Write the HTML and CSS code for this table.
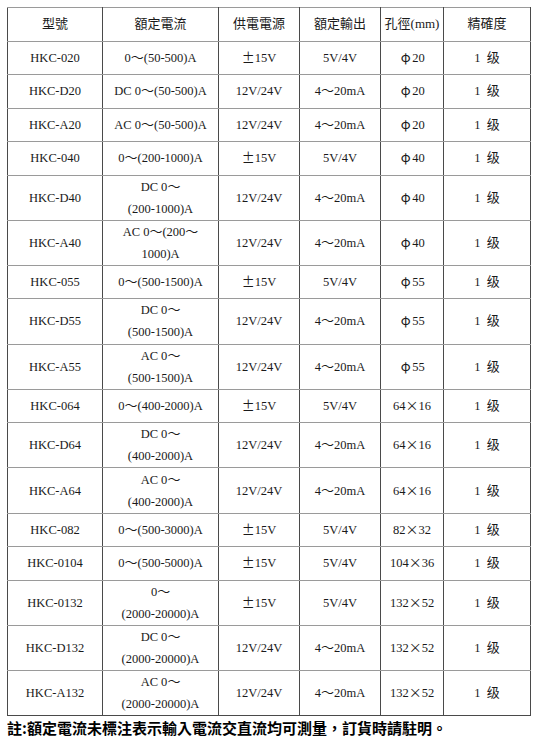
FILE: index.html
```html
<!DOCTYPE html>
<html lang="zh-Hant">
<head>
<meta charset="utf-8">
<link rel="stylesheet" href="styles.css">
</head>
<body>
<table class="spec">
<colgroup>
<col class="c1"><col class="c2"><col class="c3"><col class="c4"><col class="c5"><col class="c6">
</colgroup>
<tr class="r1 head"><td>型號</td><td>額定電流</td><td>供電電源</td><td>額定輸出</td><td>孔徑(mm)</td><td>精確度</td></tr>
<tr class="r1"><td>HKC-020</td><td>0<span class="fw">～</span>(50-500)A</td><td><span class="fw">±</span>15V</td><td>5V/4V</td><td><span class="fw">φ</span>20</td><td>1 <span class="cj">级</span></td></tr>
<tr class="r1"><td>HKC-D20</td><td>DC 0<span class="fw">～</span>(50-500)A</td><td>12V/24V</td><td>4<span class="fw">～</span>20mA</td><td><span class="fw">φ</span>20</td><td>1 <span class="cj">级</span></td></tr>
<tr class="r1"><td>HKC-A20</td><td>AC 0<span class="fw">～</span>(50-500)A</td><td>12V/24V</td><td>4<span class="fw">～</span>20mA</td><td><span class="fw">φ</span>20</td><td>1 <span class="cj">级</span></td></tr>
<tr class="r1"><td>HKC-040</td><td>0<span class="fw">～</span>(200-1000)A</td><td><span class="fw">±</span>15V</td><td>5V/4V</td><td><span class="fw">φ</span>40</td><td>1 <span class="cj">级</span></td></tr>
<tr class="r2"><td>HKC-D40</td><td>DC 0<span class="fw">～</span><br>(200-1000)A</td><td>12V/24V</td><td>4<span class="fw">～</span>20mA</td><td><span class="fw">φ</span>40</td><td>1 <span class="cj">级</span></td></tr>
<tr class="r2"><td>HKC-A40</td><td>AC 0<span class="fw">～</span>(200<span class="fw">～</span><br>1000)A</td><td>12V/24V</td><td>4<span class="fw">～</span>20mA</td><td><span class="fw">φ</span>40</td><td>1 <span class="cj">级</span></td></tr>
<tr class="r1"><td>HKC-055</td><td>0<span class="fw">～</span>(500-1500)A</td><td><span class="fw">±</span>15V</td><td>5V/4V</td><td><span class="fw">φ</span>55</td><td>1 <span class="cj">级</span></td></tr>
<tr class="r2"><td>HKC-D55</td><td>DC 0<span class="fw">～</span><br>(500-1500)A</td><td>12V/24V</td><td>4<span class="fw">～</span>20mA</td><td><span class="fw">φ</span>55</td><td>1 <span class="cj">级</span></td></tr>
<tr class="r2"><td>HKC-A55</td><td>AC 0<span class="fw">～</span><br>(500-1500)A</td><td>12V/24V</td><td>4<span class="fw">～</span>20mA</td><td><span class="fw">φ</span>55</td><td>1 <span class="cj">级</span></td></tr>
<tr class="r1"><td>HKC-064</td><td>0<span class="fw">～</span>(400-2000)A</td><td><span class="fw">±</span>15V</td><td>5V/4V</td><td>64<span class="fw">×</span>16</td><td>1 <span class="cj">级</span></td></tr>
<tr class="r2"><td>HKC-D64</td><td>DC 0<span class="fw">～</span><br>(400-2000)A</td><td>12V/24V</td><td>4<span class="fw">～</span>20mA</td><td>64<span class="fw">×</span>16</td><td>1 <span class="cj">级</span></td></tr>
<tr class="r2"><td>HKC-A64</td><td>AC 0<span class="fw">～</span><br>(400-2000)A</td><td>12V/24V</td><td>4<span class="fw">～</span>20mA</td><td>64<span class="fw">×</span>16</td><td>1 <span class="cj">级</span></td></tr>
<tr class="r1"><td>HKC-082</td><td>0<span class="fw">～</span>(500-3000)A</td><td><span class="fw">±</span>15V</td><td>5V/4V</td><td>82<span class="fw">×</span>32</td><td>1 <span class="cj">级</span></td></tr>
<tr class="r1"><td>HKC-0104</td><td>0<span class="fw">～</span>(500-5000)A</td><td><span class="fw">±</span>15V</td><td>5V/4V</td><td>104<span class="fw">×</span>36</td><td>1 <span class="cj">级</span></td></tr>
<tr class="r2"><td>HKC-0132</td><td>0<span class="fw">～</span><br>(2000-20000)A</td><td><span class="fw">±</span>15V</td><td>5V/4V</td><td>132<span class="fw">×</span>52</td><td>1 <span class="cj">级</span></td></tr>
<tr class="r2"><td>HKC-D132</td><td>DC 0<span class="fw">～</span><br>(2000-20000)A</td><td>12V/24V</td><td>4<span class="fw">～</span>20mA</td><td>132<span class="fw">×</span>52</td><td>1 <span class="cj">级</span></td></tr>
<tr class="r2 last"><td>HKC-A132</td><td>AC 0<span class="fw">～</span><br>(2000-20000)A</td><td>12V/24V</td><td>4<span class="fw">～</span>20mA</td><td>132<span class="fw">×</span>52</td><td>1 <span class="cj">级</span></td></tr>
</table>
<p class="note">註:額定電流未標注表示輸入電流交直流均可測量，訂貨時請駐明。</p>
</body>
</html>
```
FILE: styles.css
```css
html, body {
  background: #ffffff;
}
body {
  margin: 7px;
  font-family: "Liberation Serif", "Noto Sans CJK TC", serif;
  font-size: 12.5px;
  color: #1a1a1a;
}
.spec {
  width: 523px;
  table-layout: fixed;
  border-collapse: collapse;
}
.c1 { width: 95px; }
.c2 { width: 116px; }
.c3 { width: 81px; }
.c4 { width: 81px; }
.c5 { width: 63px; }
.c6 { width: 87px; }
.spec td {
  padding: 0 2px;
  text-align: center;
  vertical-align: middle;
  line-height: 22px;
  white-space: nowrap;
  border-left: 1px solid #4a4a4a;
  border-right: 1px solid #4a4a4a;
  border-top: 1px solid #9a9a9a;
  border-bottom: 1px solid #9a9a9a;
}
.head td {
  font-size: 13px;
  font-weight: normal;
}
.r1 td { height: 32.5px; }
.r2 td { height: 44.2px; }
.last td { border-bottom-color: #4a4a4a; }
.fw {
  display: inline-block;
  width: 13px;
  text-align: center;
  font-family: "Noto Sans CJK TC", sans-serif;
  font-size: 13px;
  line-height: 1;
}
.cj {
  font-family: "Noto Sans CJK TC", sans-serif;
  font-size: 13px;
  line-height: 1;
  margin-left: 3px;
}
.note {
  margin: 3px 0 0 0;
  font-family: "Noto Sans CJK TC", sans-serif;
  font-weight: bold;
  font-size: 15px;
  line-height: 18px;
  color: #000;
}
```
